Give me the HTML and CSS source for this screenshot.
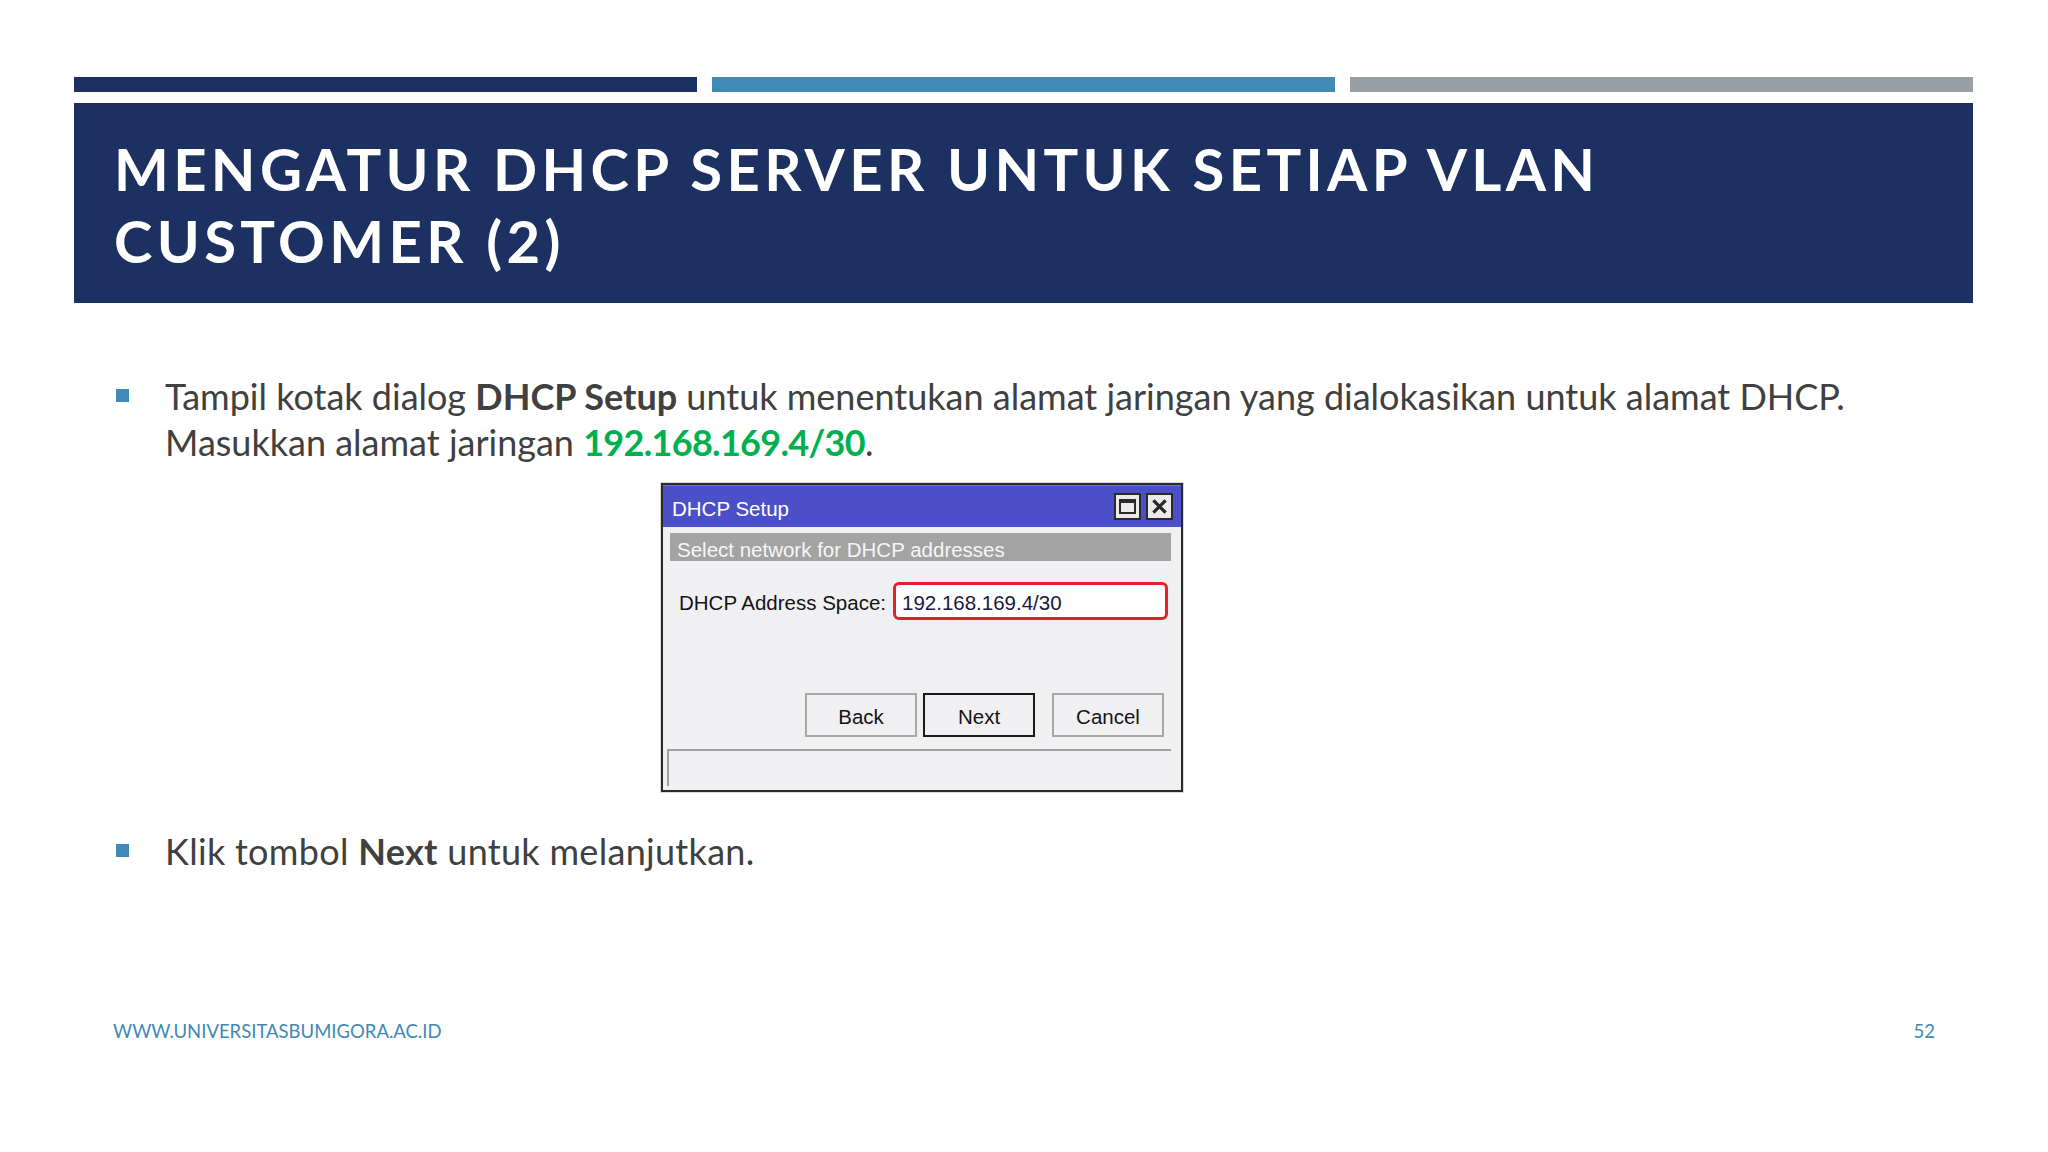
FILE: index.html
```html
<!DOCTYPE html>
<html lang="id">
<head>
<meta charset="utf-8">
<title>Mengatur DHCP Server</title>
<link rel="stylesheet" href="styles.css">
</head>
<body>
<div class="slide">
  <div class="bars">
    <div class="bar bar-navy"></div>
    <div class="bar bar-blue"></div>
    <div class="bar bar-gray"></div>
  </div>
  <div class="title-block">
    <h1 class="title">MENGATUR DHCP SERVER UNTUK SETIAP VLAN<br>CUSTOMER (2)</h1>
  </div>

  <div class="content">
    <div class="item item-first">
      <span class="bullet"></span>
      <div class="item-body">
        <p class="text">Tampil kotak dialog <b>DHCP Setup</b> untuk menentukan alamat jaringan yang dialokasikan untuk alamat DHCP.<br>Masukkan alamat jaringan <b class="green">192.168.169.4/30</b>.</p>
        <div class="dialog">
          <div class="dlg-titlebar">
            <span class="dlg-title">DHCP Setup</span>
            <div class="dlg-tbtns">
              <span class="tbtn">
                <svg width="17" height="15" viewBox="0 0 17 15"><rect x="1" y="1" width="15" height="13" fill="none" stroke="#2a2a2a" stroke-width="2"/><rect x="1" y="1" width="15" height="3" fill="#2a2a2a"/></svg>
              </span>
              <span class="tbtn">
                <svg width="15" height="15" viewBox="0 0 15 15"><path d="M2.5 2.5 L12.5 12.5 M12.5 2.5 L2.5 12.5" stroke="#2a2a2a" stroke-width="3.2" stroke-linecap="square"/></svg>
              </span>
            </div>
          </div>
          <div class="dlg-sub">Select network for DHCP addresses</div>
          <div class="dlg-row">
            <span class="dlg-label">DHCP Address Space:</span>
            <div class="dlg-input"><span>192.168.169.4/30</span></div>
          </div>
          <div class="dlg-buttons">
            <span class="dbtn">Back</span>
            <span class="dbtn dbtn-default">Next</span>
            <span class="dbtn dbtn-cancel">Cancel</span>
          </div>
          <div class="dlg-status"></div>
        </div>
      </div>
    </div>
    <div class="item item-second">
      <span class="bullet"></span>
      <div class="item-body">
        <p class="text text-second">Klik tombol <b>Next</b> untuk melanjutkan.</p>
      </div>
    </div>
  </div>

  <div class="footer">
    <span class="footer-url">WWW.UNIVERSITASBUMIGORA.AC.ID</span>
    <span class="footer-page">52</span>
  </div>
</div>
</body>
</html>
```

FILE: styles.css
```css
* { box-sizing: border-box; }
html, body { margin: 0; padding: 0; background: #ffffff; }

.slide {
  width: 2048px;
  height: 1152px;
  padding: 77px 75px 109px 74px;
  display: flex;
  flex-direction: column;
  font-family: "Lato", "Open Sans", sans-serif;
  color: #404040;
  overflow: hidden;
}

.bars { display: flex; gap: 15px; height: 15px; }
.bar { flex: 1; height: 15px; }
.bar-navy { background: #1c3162; }
.bar-blue { background: #418ab5; }
.bar-gray { background: #979fa5; }

.title-block {
  margin-top: 11px;
  height: 200px;
  background: #1c3162;
  padding: 30px 0 0 40px;
}
.title {
  margin: 0;
  font-family: "Lato", sans-serif;
  font-weight: 700;
  font-size: 58px;
  line-height: 72px;
  color: #ffffff;
  letter-spacing: 4.35px;
}

.content { padding-left: 42px; }
.item { display: flex; }
.item-first { margin-top: 70px; }
.item-second { margin-top: 36px; }
.bullet {
  width: 13px;
  height: 13px;
  background: #418ab5;
  margin-top: 16px;
  margin-right: 36px;
  flex: none;
}
.item-body { flex: 1; }
.text {
  margin: 0;
  font-size: 36px;
  line-height: 46px;
  color: #404040;
}
.text-second { letter-spacing: 0.3px; }
.text b { font-weight: 700; color: #404040; }
.text b.green { color: #00b050; letter-spacing: -0.7px; }

/* Dialog */
.dialog {
  margin: 18px 0 0 496px;
  width: 522px;
  height: 309px;
  border: 2px solid #2a2a2a;
  background: #f0eff2;
  display: flex;
  flex-direction: column;
  font-family: "Liberation Sans", Arial, sans-serif;
  font-size: 20.5px;
  color: #141414;
  white-space: nowrap;
  box-shadow: 0 0 0 1px #d8d8d8;
}
.dlg-titlebar {
  height: 42px;
  background: #4b50c8;
  display: flex;
  align-items: center;
  justify-content: space-between;
  padding: 4px 8px 0 9px;
  border-top: 1px solid #6c70d8;
}
.dlg-title { color: #ffffff; }
.dlg-tbtns { display: flex; gap: 5px; margin-top: -4px; }
.tbtn {
  width: 27px;
  height: 27px;
  border: 2px solid #2a2a2a;
  background: #ebebeb;
  display: flex;
  align-items: center;
  justify-content: center;
}

.dlg-sub {
  margin: 6px 10px 0 7px;
  height: 28px;
  background: #a3a3a3;
  color: #f6f6f6;
  padding: 3px 0 0 7px;
  line-height: 28px;
  overflow: hidden;
}

.dlg-row {
  display: flex;
  align-items: center;
  margin: 21px 13px 0 16px;
  height: 38px;
}
.dlg-label { width: 214px; padding-top: 3px; }
.dlg-input {
  flex: 1;
  height: 38px;
  border: 3px solid #e3212b;
  border-radius: 6px;
  background: #ffffff;
  padding: 3px 0 0 6px;
  display: flex;
  align-items: center;
  color: #1a1840;
}

.dlg-buttons {
  display: flex;
  justify-content: flex-end;
  margin: 73px 17px 0 0;
  height: 44px;
}
.dbtn {
  width: 112px;
  height: 44px;
  border: 2px solid #a8a8a8;
  background: #f0eff2;
  display: flex;
  align-items: center;
  justify-content: center;
  padding-top: 3px;
  margin-left: 6px;
  color: #141414;
}
.dbtn-default { border-color: #1a1a1a; }
.dbtn-cancel { margin-left: 17px; }

.dlg-status {
  margin: 12px 10px 0 4px;
  height: 37px;
  border-top: 2px solid #a0a0a0;
  border-left: 2px solid #a0a0a0;
}

.footer {
  margin-top: auto;
  display: flex;
  justify-content: space-between;
  padding: 0 38px 0 39px;
  font-family: "Lato", sans-serif;
  font-size: 18.5px;
  line-height: 24px;
  color: #3f88b5;
}
```
